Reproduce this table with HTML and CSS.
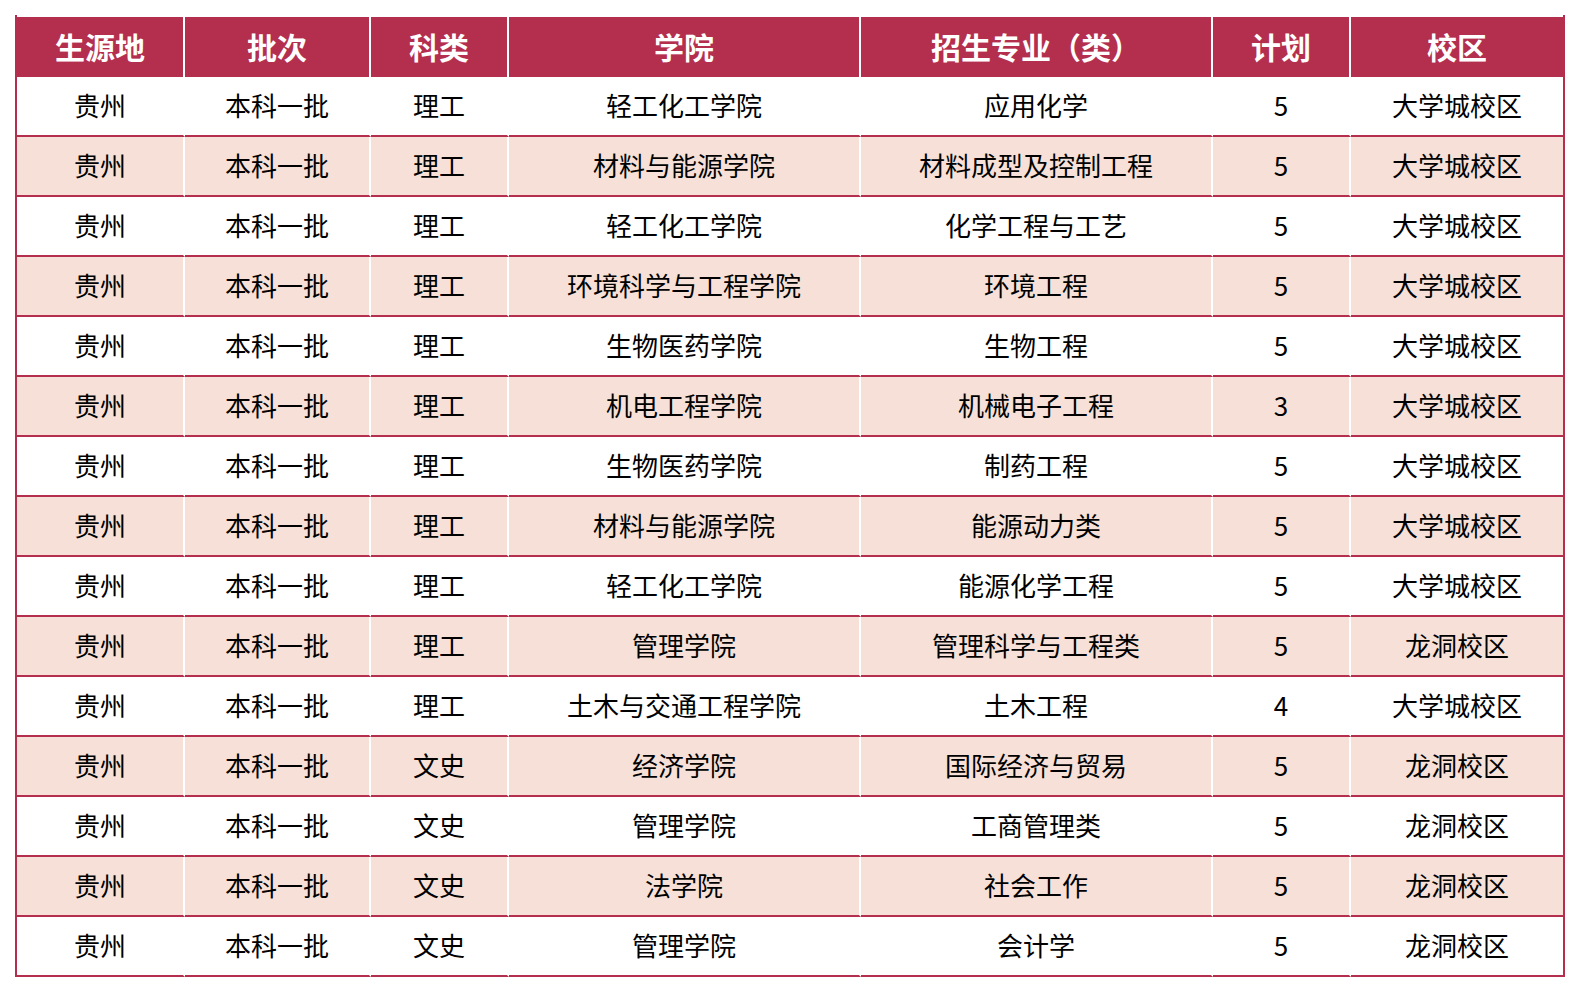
FILE: index.html
```html
<!DOCTYPE html>
<html lang="zh-CN">
<head>
<meta charset="utf-8">
<title>招生计划</title>
<link rel="stylesheet" href="styles.css">
</head>
<body>
<div class="table">
  <div class="row head">
    <div class="cell">生源地</div><div class="cell">批次</div><div class="cell">科类</div><div class="cell">学院</div><div class="cell">招生专业（类）</div><div class="cell">计划</div><div class="cell">校区</div>
  </div>
  <div class="row"><div class="cell">贵州</div><div class="cell">本科一批</div><div class="cell">理工</div><div class="cell">轻工化工学院</div><div class="cell">应用化学</div><div class="cell">5</div><div class="cell">大学城校区</div></div>
  <div class="row alt"><div class="cell">贵州</div><div class="cell">本科一批</div><div class="cell">理工</div><div class="cell">材料与能源学院</div><div class="cell">材料成型及控制工程</div><div class="cell">5</div><div class="cell">大学城校区</div></div>
  <div class="row"><div class="cell">贵州</div><div class="cell">本科一批</div><div class="cell">理工</div><div class="cell">轻工化工学院</div><div class="cell">化学工程与工艺</div><div class="cell">5</div><div class="cell">大学城校区</div></div>
  <div class="row alt"><div class="cell">贵州</div><div class="cell">本科一批</div><div class="cell">理工</div><div class="cell">环境科学与工程学院</div><div class="cell">环境工程</div><div class="cell">5</div><div class="cell">大学城校区</div></div>
  <div class="row"><div class="cell">贵州</div><div class="cell">本科一批</div><div class="cell">理工</div><div class="cell">生物医药学院</div><div class="cell">生物工程</div><div class="cell">5</div><div class="cell">大学城校区</div></div>
  <div class="row alt"><div class="cell">贵州</div><div class="cell">本科一批</div><div class="cell">理工</div><div class="cell">机电工程学院</div><div class="cell">机械电子工程</div><div class="cell">3</div><div class="cell">大学城校区</div></div>
  <div class="row"><div class="cell">贵州</div><div class="cell">本科一批</div><div class="cell">理工</div><div class="cell">生物医药学院</div><div class="cell">制药工程</div><div class="cell">5</div><div class="cell">大学城校区</div></div>
  <div class="row alt"><div class="cell">贵州</div><div class="cell">本科一批</div><div class="cell">理工</div><div class="cell">材料与能源学院</div><div class="cell">能源动力类</div><div class="cell">5</div><div class="cell">大学城校区</div></div>
  <div class="row"><div class="cell">贵州</div><div class="cell">本科一批</div><div class="cell">理工</div><div class="cell">轻工化工学院</div><div class="cell">能源化学工程</div><div class="cell">5</div><div class="cell">大学城校区</div></div>
  <div class="row alt"><div class="cell">贵州</div><div class="cell">本科一批</div><div class="cell">理工</div><div class="cell">管理学院</div><div class="cell">管理科学与工程类</div><div class="cell">5</div><div class="cell">龙洞校区</div></div>
  <div class="row"><div class="cell">贵州</div><div class="cell">本科一批</div><div class="cell">理工</div><div class="cell">土木与交通工程学院</div><div class="cell">土木工程</div><div class="cell">4</div><div class="cell">大学城校区</div></div>
  <div class="row alt"><div class="cell">贵州</div><div class="cell">本科一批</div><div class="cell">文史</div><div class="cell">经济学院</div><div class="cell">国际经济与贸易</div><div class="cell">5</div><div class="cell">龙洞校区</div></div>
  <div class="row"><div class="cell">贵州</div><div class="cell">本科一批</div><div class="cell">文史</div><div class="cell">管理学院</div><div class="cell">工商管理类</div><div class="cell">5</div><div class="cell">龙洞校区</div></div>
  <div class="row alt"><div class="cell">贵州</div><div class="cell">本科一批</div><div class="cell">文史</div><div class="cell">法学院</div><div class="cell">社会工作</div><div class="cell">5</div><div class="cell">龙洞校区</div></div>
  <div class="row"><div class="cell">贵州</div><div class="cell">本科一批</div><div class="cell">文史</div><div class="cell">管理学院</div><div class="cell">会计学</div><div class="cell">5</div><div class="cell">龙洞校区</div></div>
</div>
</body>
</html>
```

FILE: styles.css
```css
html, body {
  margin: 0;
  padding: 0;
  background: #ffffff;
}

body {
  font-family: "Noto Sans CJK SC", "Noto Sans", sans-serif;
  color: #000000;
}

.table {
  margin: 15px 0 0 15px;
  width: 1550px;
  box-sizing: border-box;
  border-left: 2px solid #b42e4e;
  border-right: 2px solid #b42e4e;
  padding-top: 2px;
}

.row {
  display: grid;
  grid-template-columns: 168px 186px 138px 352px 352px 138px 212px;
  height: 60px;
}

.cell {
  box-sizing: border-box;
  display: flex;
  align-items: center;
  justify-content: center;
  border-right: 2px solid #ffffff;
  border-bottom: 2px solid #b42e4e;
  padding-bottom: 3px;
  font-size: 26px;
  line-height: 1;
  white-space: nowrap;
}

.cell:last-child {
  border-right: none;
}

.row.alt .cell {
  background: #f6e0d7;
}

.row.head .cell {
  background: #b42e4e;
  color: #ffffff;
  font-weight: 700;
  font-size: 30px;
  border-bottom: none;
}
```
